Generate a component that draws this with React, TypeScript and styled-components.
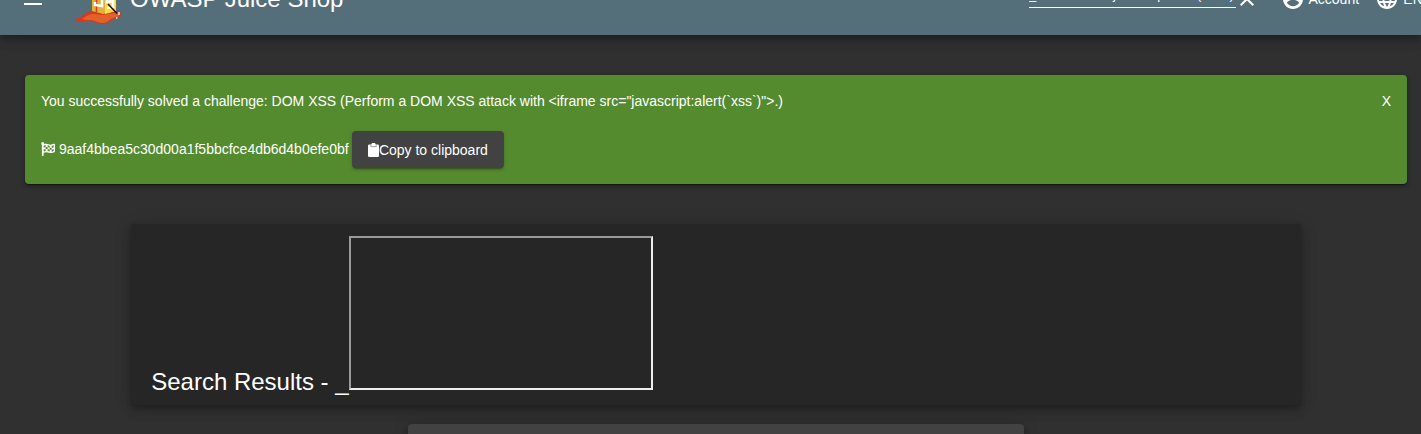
import React from 'react';
import styled, { createGlobalStyle } from 'styled-components';
import { FaFlagCheckered } from 'react-icons/fa';
import { MdClose, MdLanguage, MdMenu } from 'react-icons/md';

const GlobalStyle = createGlobalStyle`
  * { box-sizing: border-box; }
  body {
    margin: 0;
    background: #303030;
    color: #fff;
    font: 400 14px/20px "Liberation Sans", Arial, sans-serif;
    overflow: hidden;
  }
`;

const Page = styled.div`
  height: 434px;
  overflow: hidden;
`;

const Toolbar = styled.header`
  display: flex;
  align-items: center;
  height: 72px;
  margin-top: -37px;
  padding-left: 21px;
  background: #546e7a;
  white-space: nowrap;
  box-shadow: 0 3px 5px -1px rgba(0, 0, 0, 0.2), 0 6px 10px 0 rgba(0, 0, 0, 0.14),
    0 1px 18px 0 rgba(0, 0, 0, 0.12);
  svg { flex: none; display: block; }
`;

const Logo = styled.svg`
  width: 48px;
  height: 52px;
  margin-left: 29px;
`;

const Title = styled.h1`
  margin: 0 0 0 8px;
  font-size: 24px;
  line-height: 32px;
  font-weight: 400;
`;

const SearchField = styled.div`
  align-self: flex-start;
  width: 207px;
  height: 32px;
  margin: 13px 0 0 auto;
  padding-top: 9px;
  overflow: hidden;
  border-bottom: 1px solid #fff;
  font-size: 13px;
  line-height: 20px;
`;

const ToolbarItem = styled.div<{ $left: number; $width: number; $gap?: number }>`
  display: flex;
  flex: none;
  align-items: center;
  gap: ${(p) => p.$gap ?? 3.5}px;
  width: ${(p) => p.$width}px;
  margin-left: ${(p) => p.$left}px;
`;

const Notice = styled.section`
  display: flex;
  justify-content: space-between;
  height: 109px;
  margin: 40px 14px 0 25px;
  padding: 16px;
  border-radius: 4px;
  background: #558b2f;
  box-shadow: 0 2px 1px -1px rgba(0, 0, 0, 0.2), 0 1px 1px 0 rgba(0, 0, 0, 0.14),
    0 1px 3px 0 rgba(0, 0, 0, 0.12), 0 2px 5px rgba(0, 0, 0, 0.3);
`;

const Flag = styled.div`
  display: flex;
  align-items: center;
  height: 37px;
  margin-top: 20px;
`;

const Code = styled.span`
  display: flex;
  align-items: center;
  gap: 4px;
  padding-bottom: 2px;
`;

const CopyButton = styled.button`
  display: flex;
  align-items: center;
  height: 37px;
  width: 152px;
  margin-left: 3px;
  padding: 1px 0 0 16px;
  border: 0;
  border-radius: 4px;
  background: #424242;
  color: #fff;
  font: inherit;
  white-space: nowrap;
  box-shadow: 0 3px 1px -2px rgba(0, 0, 0, 0.2), 0 2px 2px 0 rgba(0, 0, 0, 0.14),
    0 1px 5px 0 rgba(0, 0, 0, 0.12);
  svg { flex: none; margin-right: 0.3px; }
`;

const Close = styled.span`
  height: 20px;
`;

const Results = styled.main`
  display: flex;
  align-items: baseline;
  width: 1170px;
  height: 181px;
  margin: 40px 0 0 131px;
  padding: 12px 20.2px;
  background: #262626;
  font-size: 24px;
  line-height: 32px;
  box-shadow: 0 3px 5px -1px rgba(0, 0, 0, 0.2), 0 6px 10px 0 rgba(0, 0, 0, 0.14),
    0 1px 18px 0 rgba(0, 0, 0, 0.12);
`;

const Frame = styled.div`
  width: 304px;
  height: 154px;
  margin-left: 0.3px;
  border: 2px solid;
  border-color: #9a9a9a #eee #eee #9a9a9a;
`;

const NextCard = styled.div`
  width: 616px;
  height: 40px;
  margin: 19px 0 0 408px;
  border-radius: 4px;
  background: #424242;
  box-shadow: 0 3px 5px -1px rgba(0, 0, 0, 0.2), 0 6px 10px 0 rgba(0, 0, 0, 0.14),
    0 1px 18px 0 rgba(0, 0, 0, 0.12);
`;

const JuiceLogo = () => (
  <Logo viewBox="0 0 48 52">
    <path d="M1 48c0-2 4-3 7-5s6-5 10-5h23c4-1 6 1 6 3 0 4-4 4-7 5-4 1-5 5-11 5-4 0-7-2-12-3-6-1-11 2-16 0z" fill="#d5391f" />
    <path d="M8 46c4-3 7-5 12-5l8 1 13-2c3 0 5 1 4 3-2 2-5 1-8 3-2 1-4 4-8 4-4 0-7-2-11-3-4 0-7 0-10-1z" fill="#e2622c" />
    <path d="M18 8h24v30l-13 3-11-3z" fill="#dfb338" />
    <path d="M31 12l11-3v29l-11 3z" fill="#ffd83e" />
    <path d="M22.5 10v29" stroke="#d93a1f" strokeWidth="1.5" />
    <path d="M28 20v13l-7-1v-3" fill="none" stroke="#fff" strokeWidth="2.5" />
    <path d="M39 24l-6 1v4l6-1v6l-6 1" fill="none" stroke="#fff" strokeWidth="2.5" />
    <path d="M34 31l9 9.5" stroke="#151515" strokeWidth="1.6" />
    <path d="M45 39v3m-3 3h1.5" stroke="#ffe1da" strokeWidth="1.5" />
  </Logo>
);

const AccountIcon = () => (
  <svg width="24" height="24" viewBox="0 0 24 24" fill="currentColor">
    <path d="M12 2C6.48 2 2 6.48 2 12s4.48 10 10 10 10-4.48 10-10S17.52 2 12 2zm0 3c1.66 0 3 1.34 3 3s-1.34 3-3 3-3-1.34-3-3 1.34-3 3-3zm0 14.2c-2.5 0-4.71-1.28-6-3.22.03-1.99 4-3.08 6-3.08 1.99 0 5.97 1.09 6 3.08-1.29 1.94-3.5 3.22-6 3.22z" />
  </svg>
);

const ClipboardIcon = () => (
  <svg width="11" height="14" viewBox="0 0 11 14" fill="currentColor">
    <rect y="1.6" width="11" height="12.4" rx="1.3" />
    <rect x="3.4" width="4.2" height="3" rx="1.4" />
    <path d="M2.8 2v1.6h5.4V2" fill="none" stroke="#8a8a8a" strokeWidth="0.8" />
  </svg>
);

export default function App() {
  return (
    <Page>
      <GlobalStyle />
      <Toolbar>
        <MdMenu size={24} />
        <JuiceLogo />
        <Title>OWASP Juice Shop</Title>
        <SearchField>{'_<iframe src="javascript:alert(`xss`)">'}</SearchField>
        <ToolbarItem $left={-1} $width={24}>
          <MdClose size={24} />
        </ToolbarItem>
        <ToolbarItem $left={22} $width={95}>
          <AccountIcon />
          <span>Account</span>
        </ToolbarItem>
        <ToolbarItem $left={-1} $width={46} $gap={4.3}>
          <MdLanguage size={24} />
          <span>EN</span>
        </ToolbarItem>
      </Toolbar>
      <Notice>
        <div>
          <div>{'You successfully solved a challenge: DOM XSS (Perform a DOM XSS attack with <iframe src="javascript:alert(`xss`)">.)'}</div>
          <Flag>
            <Code>
              <FaFlagCheckered size={14} />
              <span>9aaf4bbea5c30d00a1f5bbcfce4db6d4b0efe0bf</span>
            </Code>
            <CopyButton>
              <ClipboardIcon />
              Copy to clipboard
            </CopyButton>
          </Flag>
        </div>
        <Close>X</Close>
      </Notice>
      <Results>
        <span>Search Results - _</span>
        <Frame />
      </Results>
      <NextCard />
    </Page>
  );
}
